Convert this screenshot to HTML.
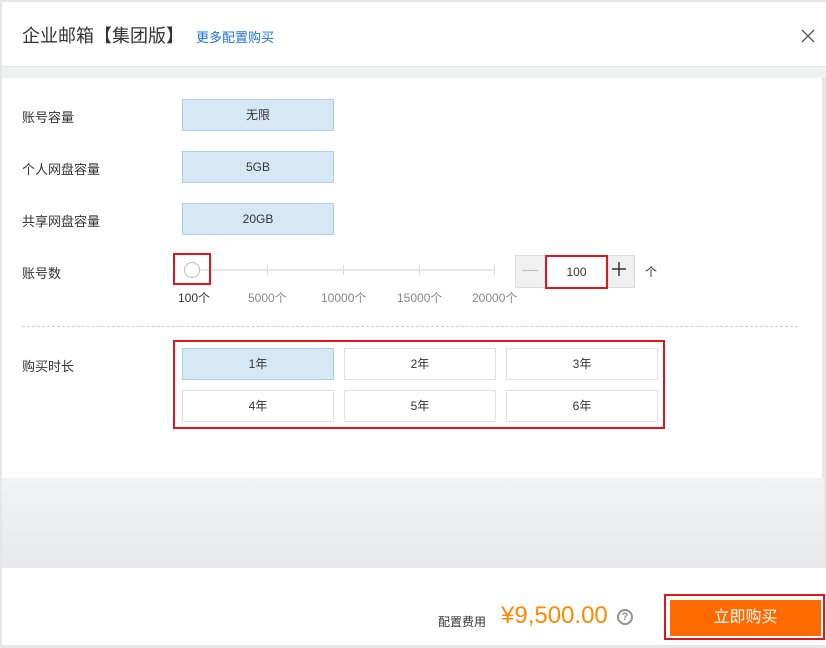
<!DOCTYPE html>
<html><head><meta charset="utf-8"><style>
*{margin:0;padding:0;box-sizing:border-box}
body{width:826px;height:648px;background:#e6e6e6;position:relative;overflow:hidden;font-family:"Liberation Sans","Noto Sans CJK SC",sans-serif;color:#333}
.a{position:absolute}
.lbl{font-size:13px;color:#333;left:22px}
.box{position:absolute;width:152px;height:32px;line-height:31px;text-align:center;font-size:12px;color:#333;border:1px solid #e0e0e0;background:#fff}
.sel{background:#d7e8f5;border-color:#abcfec}
.tick{position:absolute;top:265px;width:1px;height:10px;background:#ddd}
.tl{position:absolute;top:289px;font-size:12px;color:#888}
</style></head><body>
<div class="a" style="left:2px;top:2px;width:824px;height:64px;background:#fff"></div>
<div class="a" style="left:22px;top:22px;font-size:18px;color:#333">企业邮箱【集团版】</div>
<div class="a" style="left:196px;top:27px;font-size:13px;color:#1a73d9">更多配置购买</div>
<svg class="a" style="left:801px;top:29px" width="14" height="14"><path d="M1 1L13 13M13 1L1 13" stroke="#555" stroke-width="1.3"/></svg>
<div class="a" style="left:2px;top:66px;width:824px;height:12px;background:#f0f1f3;border-top:1px solid #e3e6ea"></div>
<div class="a" style="left:2px;top:78px;width:820px;height:400px;background:#fff"></div>
<div class="a" style="left:2px;top:478px;width:822px;height:90px;background:linear-gradient(#f1f2f4,#e8e9eb)"></div>
<div class="a" style="left:2px;top:568px;width:824px;height:77px;background:#fff"></div>

<div class="a lbl" style="top:107px">账号容量</div>
<div class="a lbl" style="top:159px">个人网盘容量</div>
<div class="a lbl" style="top:211px">共享网盘容量</div>
<div class="a lbl" style="top:263px">账号数</div>
<div class="a lbl" style="top:356px">购买时长</div>
<div class="box sel" style="left:182px;top:99px">无限</div>
<div class="box sel" style="left:182px;top:151px">5GB</div>
<div class="box sel" style="left:182px;top:203px">20GB</div>

<div class="a" style="left:192px;top:269px;width:302px;height:2px;background:#e8e8e8"></div>
<div class="tick" style="left:267px"></div><div class="tick" style="left:343px"></div><div class="tick" style="left:419px"></div><div class="tick" style="left:494px"></div>
<div class="a" style="left:184px;top:262px;width:16px;height:16px;border-radius:50%;border:1px solid #bbb;background:#fff"></div>
<div class="a" style="left:173px;top:253px;width:38px;height:32px;border:2px solid #e0161f"></div>
<div class="tl" style="left:178px;color:#333">100个</div>
<div class="tl" style="left:248px">5000个</div>
<div class="tl" style="left:321px">10000个</div>
<div class="tl" style="left:397px">15000个</div>
<div class="tl" style="left:472px">20000个</div>
<div class="a" style="left:515px;top:255px;width:120px;height:33px;background:#f0f0f0;border:1px solid #ddd"></div>
<div class="a" style="left:522px;top:270px;width:16px;height:1px;background:#bbb"></div>
<div class="a" style="left:545px;top:255px;width:63px;height:34px;background:#fff;border:2px solid #e0161f;text-align:center;line-height:30px;font-size:12px">100</div>
<svg class="a" style="left:612px;top:262px" width="14" height="14"><path d="M7 0V14M0 7H14" stroke="#333" stroke-width="1.5"/></svg>
<div class="a" style="left:645px;top:263px;font-size:12px;color:#333">个</div>

<div class="a" style="left:22px;top:326px;width:776px;border-top:1px dashed #ccc"></div>
<div class="a" style="left:173px;top:340px;width:492px;height:89px;border:2px solid #e0161f"></div>
<div class="box sel" style="left:182px;top:348px">1年</div>
<div class="box" style="left:344px;top:348px">2年</div>
<div class="box" style="left:506px;top:348px">3年</div>
<div class="box" style="left:182px;top:390px">4年</div>
<div class="box" style="left:344px;top:390px">5年</div>
<div class="box" style="left:506px;top:390px">6年</div>

<div class="a" style="left:438px;top:613px;font-size:12px;color:#333">配置费用</div>
<div class="a" style="left:501px;top:602px;font-size:24px;color:#ff8a00">¥9,500.00</div>
<div class="a" style="left:617px;top:609px;width:16px;height:16px;border-radius:50%;border:2px solid #9a8f8f;text-align:center;font-size:11px;line-height:12px;color:#9a8f8f;font-weight:bold">?</div>
<div class="a" style="left:664px;top:594px;width:161px;height:46px;border:2px solid #e0161f"></div>
<div class="a" style="left:670px;top:600px;width:151px;height:36px;background:#ff6a00;color:#fff;font-size:16px;text-align:center;line-height:36px">立即购买</div>
</body></html>
